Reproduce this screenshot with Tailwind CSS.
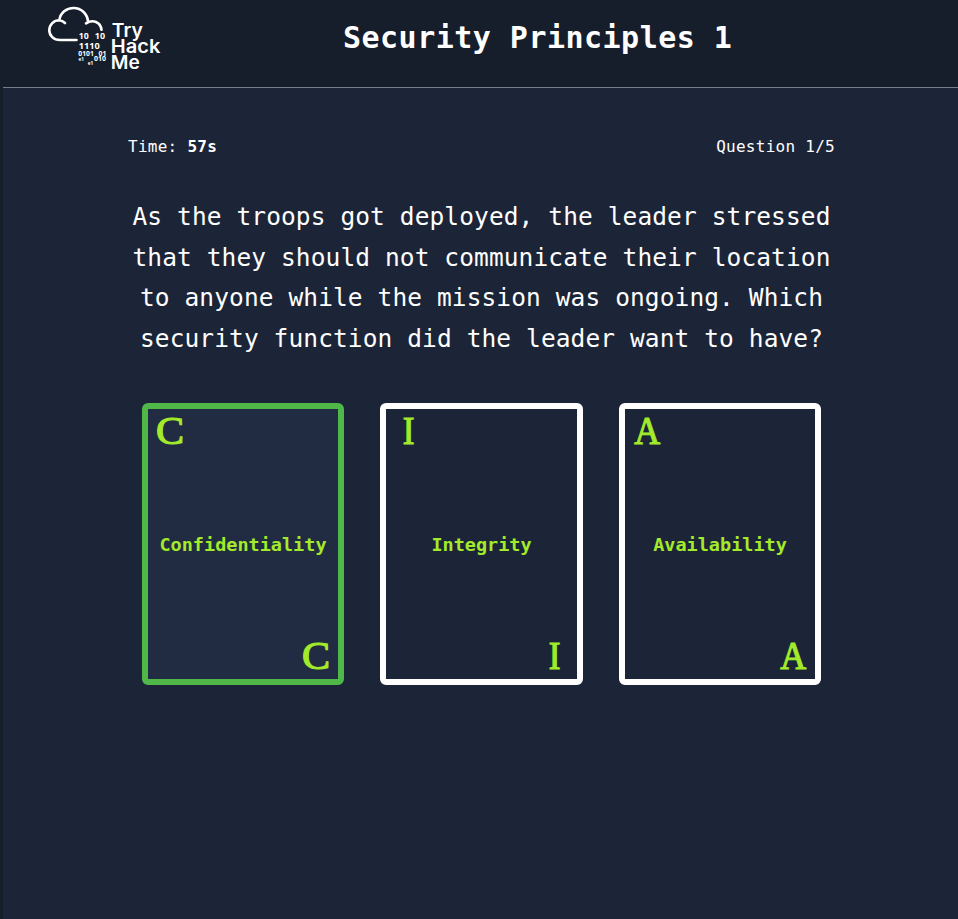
<!DOCTYPE html>
<html lang="en">
<head>
<meta charset="utf-8">
<title>Security Principles 1</title>
<script src="https://cdn.jsdelivr.net/npm/@tailwindcss/browser@4"></script>
</head>
<body class="bg-[#161d2b] text-white font-['DejaVu_Sans_Mono',monospace]">
<div class="h-[919px] w-[958px] overflow-hidden pl-[3px] flex flex-col">
  <header class="h-[87px] shrink-0 flex">
    <svg class="w-[125px] h-[80px] ml-[42px] shrink-0" viewBox="45 0 125 80" fill="none" font-family="Lato, sans-serif" font-weight="700">
      <path d="M76.500 40H60C53.500 40 49.300 35.600 49.300 30.300C49.300 24.400 54 20.300 59.300 20.300Q62.500 20.600 65 23M59.300 20.300C60.300 12.800 66.500 8 73.500 8C81.500 8 87.600 14 88 21.800M86 23.300C93 19 100.500 22 101.500 29.800" stroke="#fff" stroke-width="2.600" stroke-linecap="round" stroke-linejoin="round"/>
      <g fill="#fff">
        <g font-size="18.500" font-family="Inter, sans-serif" font-weight="600">
          <text x="111.800" y="36.500" textLength="31" lengthAdjust="spacingAndGlyphs">Try</text>
          <text x="110.800" y="53.300" textLength="49.500" lengthAdjust="spacingAndGlyphs">Hack</text>
          <text x="110.800" y="69.100" textLength="29" lengthAdjust="spacingAndGlyphs">Me</text>
        </g>
        <g font-family="Open Sans, sans-serif">
          <text x="78.800" y="39" font-size="8.500" textLength="10" lengthAdjust="spacingAndGlyphs">10</text>
          <text x="94.800" y="39" font-size="8.500" textLength="10.200" lengthAdjust="spacingAndGlyphs">10</text>
          <text x="78.800" y="48.800" font-size="8.500" textLength="21" lengthAdjust="spacingAndGlyphs">1110</text>
          <text x="78.300" y="55.800" font-size="6.200" textLength="15.500" lengthAdjust="spacingAndGlyphs">0101</text>
          <text x="98.500" y="55.800" font-size="6.200" textLength="7.800" lengthAdjust="spacingAndGlyphs">01</text>
          <text x="78.500" y="60.800" font-size="4.500" textLength="5.500" lengthAdjust="spacingAndGlyphs">e1</text>
          <text x="94" y="61.200" font-size="6.200" textLength="12" lengthAdjust="spacingAndGlyphs">010</text>
          <text x="87.800" y="65.200" font-size="4.500" textLength="5.500" lengthAdjust="spacingAndGlyphs">e1</text>
        </g>
      </g>
    </svg>
    <h1 class="ml-[173px] mt-[17px] text-[30px] leading-[42px] font-bold tracking-[0.480px] whitespace-nowrap">Security Principles 1</h1>
  </header>
  <main class="flex-1 bg-[#1c2538] border-t border-[#757d88]">
    <div class="mx-[125px] mt-[47px] flex justify-between w-[707px] text-[16px] leading-[24px] tracking-[0.270px]">
      <p>Time: <b>57s</b></p>
      <p>Question 1/5</p>
    </div>
    <p class="mt-[38px] w-[957px] text-center text-[24.500px] leading-[40.600px] tracking-[0.100px] whitespace-nowrap">As the troops got deployed, the leader stressed<br>that they should not communicate their location<br>to anyone while the mission was ongoing. Which<br>security function did the leader want to have?</p>
    <div class="ml-[139px] mt-[44px] flex gap-[36px] text-[#a3ea2a]">
      <section class="w-[202px] h-[282px] border-[6px] border-[#50b848] rounded-[6px] bg-[#212c42] flex flex-col justify-between px-[8px]">
        <span class="h-[44px] leading-[44px] text-[39px] font-['Liberation_Serif',serif] [-webkit-text-stroke:1.2px_#a3ea2a]"><span class="inline-block origin-left scale-x-108">C</span></span>
        <b class="pt-[2px] text-center text-[18.500px] leading-[24px] whitespace-nowrap">Confidentiality</b>
        <span class="h-[44px] leading-[42px] text-[39px] text-right font-['Liberation_Serif',serif] [-webkit-text-stroke:1.2px_#a3ea2a]"><span class="inline-block origin-right scale-x-108">C</span></span>
      </section>
      <section class="w-[203px] h-[282px] border-[6px] border-white rounded-[6px] flex flex-col justify-between px-[16px]">
        <span class="h-[44px] leading-[44px] text-[39px] font-['Liberation_Serif',serif] [-webkit-text-stroke:1.2px_#a3ea2a]"><span class="inline-block scale-x-90">I</span></span>
        <b class="pt-[2px] text-center text-[18.500px] leading-[24px] whitespace-nowrap">Integrity</b>
        <span class="h-[44px] leading-[42px] text-[39px] text-right font-['Liberation_Serif',serif] [-webkit-text-stroke:1.2px_#a3ea2a]"><span class="inline-block scale-x-90">I</span></span>
      </section>
      <section class="w-[202px] h-[282px] border-[6px] border-white rounded-[6px] flex flex-col justify-between px-[8px]">
        <span class="h-[44px] leading-[44px] text-[39px] font-['Liberation_Serif',serif] [-webkit-text-stroke:1.2px_#a3ea2a]"><span class="inline-block scale-x-92">A</span></span>
        <b class="pt-[2px] text-center text-[18.500px] leading-[24px] whitespace-nowrap">Availability</b>
        <span class="h-[44px] leading-[42px] text-[39px] text-right font-['Liberation_Serif',serif] [-webkit-text-stroke:1.2px_#a3ea2a]"><span class="inline-block scale-x-92">A</span></span>
      </section>
    </div>
  </main>
</div>
</body>
</html>
